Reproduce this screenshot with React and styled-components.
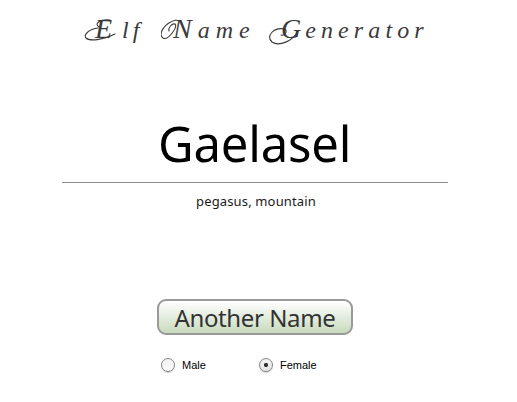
import React, { useState } from "react";
import styled, { createGlobalStyle } from "styled-components";

const GlobalStyle = createGlobalStyle`
  * { box-sizing: border-box; }
  body { margin: 0; background: #fff; }
`;

const Page = styled.main`
  width: 517px;
  height: 402px;
  overflow: hidden;
  display: flex;
  flex-direction: column;
  font-family: "Noto Sans", sans-serif;
`;

const Title = styled.h1`
  margin: 0;
  height: 123px;
  padding: 11px 0 0 84px;
  display: flex;
  align-items: flex-start;
  font: italic 400 24px/36px "Liberation Serif", serif;
  color: #3a3a3a;
  white-space: pre;
`;

const Word = styled.span`
  position: relative;
  display: block;
  flex: none;
  width: ${(p) => p.$width}px;
  padding-left: ${(p) => p.$indent}px;
  letter-spacing: ${(p) => p.$spacing}px;

  &::first-letter {
    font-size: 28px;
    letter-spacing: ${(p) => p.$capSpacing}px;
  }
`;

/* Calligraphic flourish that trails from a capital. */
const Flourish = styled.svg`
  position: absolute;
  left: 0;
  top: 5px;
  width: 40px;
  height: 32px;
  fill: none;
  stroke: #3a3a3a;
  stroke-width: 1.1;
  stroke-linecap: round;
`;

const Result = styled.section`
  width: 386px;
  margin-left: 62px;
  height: 176px;
  display: flex;
  flex-direction: column;
  align-items: center;
`;

const ElfName = styled.h2`
  margin: 0;
  width: 100%;
  height: 60px;
  padding-left: 96px;
  border-bottom: 1px solid #8c8c8c;
  font-size: 49px;
  line-height: 41px;
  font-weight: 400;
  letter-spacing: -0.2px;
  color: #000;
`;

const Meaning = styled.p`
  margin: 8px 0 0 2px;
  font-size: 13px;
  line-height: 20px;
  letter-spacing: 0.15px;
  color: #1a1a1a;
`;

const GenerateButton = styled.button`
  width: 196px;
  height: 36px;
  margin-left: 157px;
  padding: 0;
  border: 2px solid #999;
  border-radius: 9px;
  background: linear-gradient(#fff, #c8dabd);
  font: 400 24px/34px "Noto Sans", sans-serif;
  letter-spacing: -0.4px;
  color: #333;
  white-space: nowrap;
`;

const Options = styled.div`
  display: flex;
  margin: 22px 0 0 161px;
`;

const Option = styled.label`
  display: flex;
  align-items: center;
  gap: 7px;
  width: 98px;
  height: 16px;
  font: 11px/16px "Liberation Sans", sans-serif;
  color: #000;
`;

const Radio = styled.input`
  appearance: none;
  width: 14px;
  height: 14px;
  margin: 0;
  border: 1px solid #858585;
  border-radius: 50%;
  background: ${(p) =>
    p.checked
      ? "radial-gradient(circle, #333 0 1.7px, transparent 2.5px), linear-gradient(#f4f4f4, #e6e6e6)"
      : "linear-gradient(#f0f0f0, #fbfbfb)"};
  box-shadow: 0 1px 1px #ccc;
`;

const words = [
  {
    text: "Elf ",
    width: 77,
    indent: 11,
    spacing: 4,
    capSpacing: 10,
    flourish: "M26 4C15 3 10 8 15 11M14 12C5 13-1 19 2 22C6 26 22 23 31 18",
  },
  {
    text: "Name ",
    width: 107,
    indent: 12,
    spacing: 6,
    capSpacing: 6,
    flourish: "M15 4C3 7-3 18 2 22C7 25 17 11 14 8C11 7 7 12 8 15",
  },
  {
    text: "Generator",
    width: 165,
    indent: 13,
    spacing: 5.1,
    capSpacing: 4,
    flourish: "M17 13C5 11-2 20 4 26C11 31 25 25 30 15M17 13C20 16 16 20 13 19",
  },
];

export default function App() {
  const [gender, setGender] = useState("Female");
  return (
    <Page>
      <GlobalStyle />
      <Title>
        {words.map((word) => (
          <Word
            key={word.text}
            $width={word.width}
            $indent={word.indent}
            $spacing={word.spacing}
            $capSpacing={word.capSpacing}
          >
            {word.text}
            <Flourish viewBox="0 0 40 32" aria-hidden="true">
              <path d={word.flourish} />
            </Flourish>
          </Word>
        ))}
      </Title>
      <Result>
        <ElfName>Gaelasel</ElfName>
        <Meaning>pegasus, mountain</Meaning>
      </Result>
      <GenerateButton type="button">Another Name</GenerateButton>
      <Options>
        {["Male", "Female"].map((name) => (
          <Option key={name}>
            <Radio
              type="radio"
              name="gender"
              checked={gender === name}
              onChange={() => setGender(name)}
            />
            {name}
          </Option>
        ))}
      </Options>
    </Page>
  );
}
